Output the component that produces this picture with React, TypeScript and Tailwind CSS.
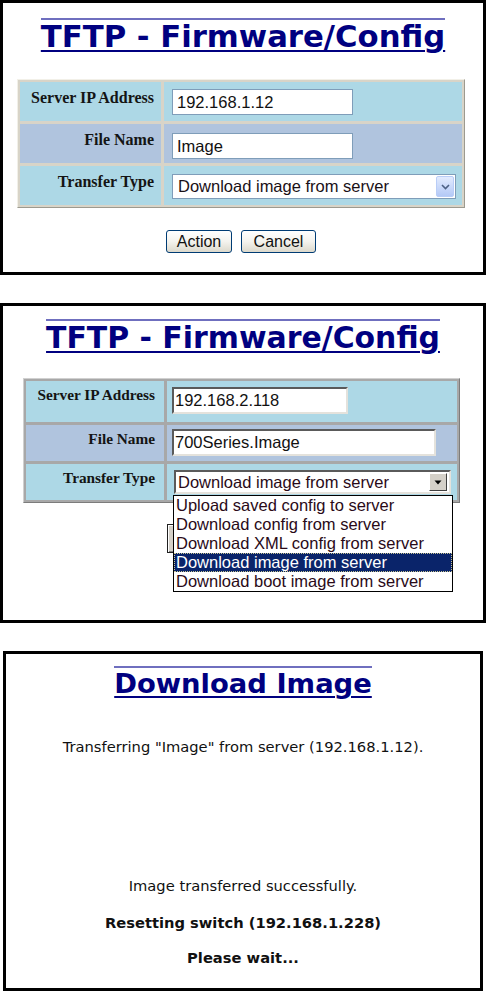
import React from 'react';

const verdana = "font-['DejaVu_Sans','Verdana',sans-serif]";
const arial = "font-['Liberation_Sans','Arial',sans-serif]";
const times = "font-['Liberation_Serif','Times_New_Roman',serif]";

function Title({ children, size }: { children: React.ReactNode; size: string }) {
  return (
    <h1
      className={`inline-block border-t-2 border-[#6f6fbf] font-bold text-[#000080] underline decoration-2 underline-offset-[3px] whitespace-nowrap ${verdana} ${size}`}
    >
      {children}
    </h1>
  );
}

// --- XP styled form (panel 1) ---
function XpLabel({ children, bg }: { children: React.ReactNode; bg: string }) {
  return (
    <div className={`${bg} ${times} text-right pr-[7px] pt-[7px] text-[16px] leading-[18px] font-bold text-[#141414] whitespace-nowrap`}>
      {children}
    </div>
  );
}

function XpInput({ value }: { value: string }) {
  return (
    <div className={`w-[181px] h-[26px] border border-[#7f9db9] bg-white pl-[4px] flex items-center text-[16.5px] text-[#111] ${arial}`}>
      {value}
    </div>
  );
}

function XpButton({ label, w }: { label: string; w: string }) {
  return (
    <div className={`${w} h-[23px] rounded-[3px] border border-[#003c74] bg-gradient-to-b from-white via-[#f4f3ee] to-[#dcd9cc] flex items-center justify-center text-[16px] text-[#111] ${arial}`}>
      {label}
    </div>
  );
}

function PanelOne() {
  return (
    <section className="h-[275px] border-[3px] border-black flex flex-col items-center pt-[15px]">
      <Title size="text-[30.7px] leading-[34px]">TFTP - Firmware/Config</Title>

      <div className="self-start ml-[14px] mt-[25px] w-[448px] border border-t-[#f2f0e8] border-l-[#f2f0e8] border-r-[#9c9a90] border-b-[#9c9a90] bg-[#d8d4c8] p-[2px] grid grid-cols-[141px_1fr] grid-rows-[39px_39px_39px] gap-[3px]">
        <XpLabel bg="bg-[#add8e6]">Server IP Address</XpLabel>
        <div className="bg-[#add8e6] pl-[8px] pt-[7px]">
          <XpInput value="192.168.1.12" />
        </div>

        <XpLabel bg="bg-[#b0c4de]">File Name</XpLabel>
        <div className="bg-[#b0c4de] pl-[8px] pt-[9px]">
          <XpInput value="Image" />
        </div>

        <XpLabel bg="bg-[#add8e6]">Transfer Type</XpLabel>
        <div className="bg-[#add8e6] pl-[8px] pt-[8px]">
          <div className={`w-[284px] h-[25px] border border-[#7f9db9] bg-white flex items-center justify-between pl-[5px] pr-[1px] text-[16.5px] text-[#1a1016] ${arial}`}>
            <span>Download image from server</span>
            <div className="w-[18px] h-[21px] rounded-[2px] border border-[#b9cdf7] bg-gradient-to-b from-[#e2ebfe] to-[#b4c9f6] flex items-center justify-center">
              <svg width="9" height="6" viewBox="0 0 9 6">
                <path d="M1 1 L4.5 4.5 L8 1" fill="none" stroke="#4d6185" strokeWidth="1.6" />
              </svg>
            </div>
          </div>
        </div>
      </div>

      <div className="mt-[22px] mr-[4px] flex gap-[9px]">
        <XpButton label="Action" w="w-[66px]" />
        <XpButton label="Cancel" w="w-[75px]" />
      </div>
    </section>
  );
}

// --- classic styled form (panel 2) ---
function ClassicLabel({ children, bg }: { children: React.ReactNode; bg: string }) {
  return (
    <div className={`${bg} ${times} text-right pr-[9px] pt-[5px] text-[15.3px] leading-[18px] font-bold text-[#141414] whitespace-nowrap`}>
      {children}
    </div>
  );
}

const inset = 'border-2 border-t-[#5a5a5a] border-l-[#5a5a5a] border-r-[#e4e2dc] border-b-[#e4e2dc]';

function ClassicInput({ value, w }: { value: string; w: string }) {
  return (
    <div className={`${w} h-[27px] ${inset} bg-white pl-[1px] flex items-center text-[16.5px] text-[#111] ${arial}`}>
      {value}
    </div>
  );
}

const options = [
  'Upload saved config to server',
  'Download config from server',
  'Download XML config from server',
  'Download image from server',
  'Download boot image from server',
];

function PanelTwo() {
  return (
    <section className="mt-[28px] h-[320px] border-[3px] border-black flex flex-col items-center pt-[13px]">
      <Title size="text-[29.9px] leading-[33px]">TFTP - Firmware/Config</Title>

      <div className="self-start ml-[20px] mt-[24px] w-[437px] border border-t-[#d0d0d0] border-l-[#d0d0d0] border-r-[#7c7c7c] border-b-[#7c7c7c] bg-[#a8a8a8] p-[2px] grid grid-cols-[138px_1fr] grid-rows-[41px_36px_36px] gap-[3px]">
        <ClassicLabel bg="bg-[#add8e6]">Server IP Address</ClassicLabel>
        <div className="bg-[#add8e6] pl-[5px] pt-[6px]">
          <ClassicInput value="192.168.2.118" w="w-[176px]" />
        </div>

        <ClassicLabel bg="bg-[#b0c4de]">File Name</ClassicLabel>
        <div className="bg-[#b0c4de] pl-[5px] pt-[4px]">
          <ClassicInput value="700Series.Image" w="w-[264px]" />
        </div>

        <ClassicLabel bg="bg-[#add8e6]">Transfer Type</ClassicLabel>
        <div className="bg-[#add8e6] pl-[7px] pt-[6px]">
          <div className={`relative w-[277px] h-[24px] ${inset} bg-white flex items-center justify-between pl-[2px] pr-[2px] text-[16.5px] text-[#2a0a18] ${arial}`}>
            <span>Download image from server</span>
            <div className="w-[18px] h-[18px] bg-[#d4d0c8] border border-t-white border-l-white border-r-[#404040] border-b-[#404040] flex items-center justify-center">
              <svg width="8" height="5" viewBox="0 0 8 5">
                <path d="M0.5 0.5 H7.5 L4 4.5 Z" fill="#000" />
              </svg>
            </div>

            {/* open dropdown list */}
            <div className="absolute z-10 left-[-3px] top-[calc(100%+3px)] w-[280px] border border-black bg-white">
              {options.map((o, i) => (
                <div
                  key={o}
                  className={`h-[19px] leading-[19px] pl-[2px] whitespace-nowrap ${
                    i === 3
                      ? 'bg-[#0a246a] text-white outline-1 outline-dotted outline-[#c8c490] -outline-offset-1'
                      : 'text-[#2a0a18]'
                  }`}
                >
                  {o}
                </div>
              ))}
            </div>
          </div>
        </div>
      </div>

      {/* buttons sit under the open list; only the left edge of Action shows */}
      <div className="mt-[21px] flex gap-[9px]">
        <div aria-label="Action" className="w-[68px] h-[29px] bg-[#d4d0c8] border border-[#202020] shadow-[inset_1px_1px_0_#fff,inset_-1px_-1px_0_#808080]" />
        <div aria-label="Cancel" className="w-[75px] h-[29px] bg-[#d4d0c8] border border-[#202020]" />
      </div>
    </section>
  );
}

function PanelThree() {
  const line = `${verdana} text-[14.7px] leading-[18px] text-[#111] whitespace-nowrap`;
  return (
    <section className="mt-[28px] ml-[3px] w-[480px] h-[340px] border-[3px] border-black flex flex-col items-center pt-[12px]">
      <Title size="text-[27.4px] leading-[32px]">Download Image</Title>
      <p className={`mt-[38px] ${line}`}>Transferring "Image" from server (192.168.1.12).</p>
      <p className={`mt-[121px] ${line}`}>Image transferred successfully.</p>
      <p className={`mt-[19px] font-bold ${line}`}>Resetting switch (192.168.1.228)</p>
      <p className={`mt-[17px] font-bold ${line}`}>Please wait...</p>
    </section>
  );
}

export default function App() {
  return (
    <div className="w-[486px] h-[991px] bg-white overflow-hidden">
      <PanelOne />
      <PanelTwo />
      <PanelThree />
    </div>
  );
}
